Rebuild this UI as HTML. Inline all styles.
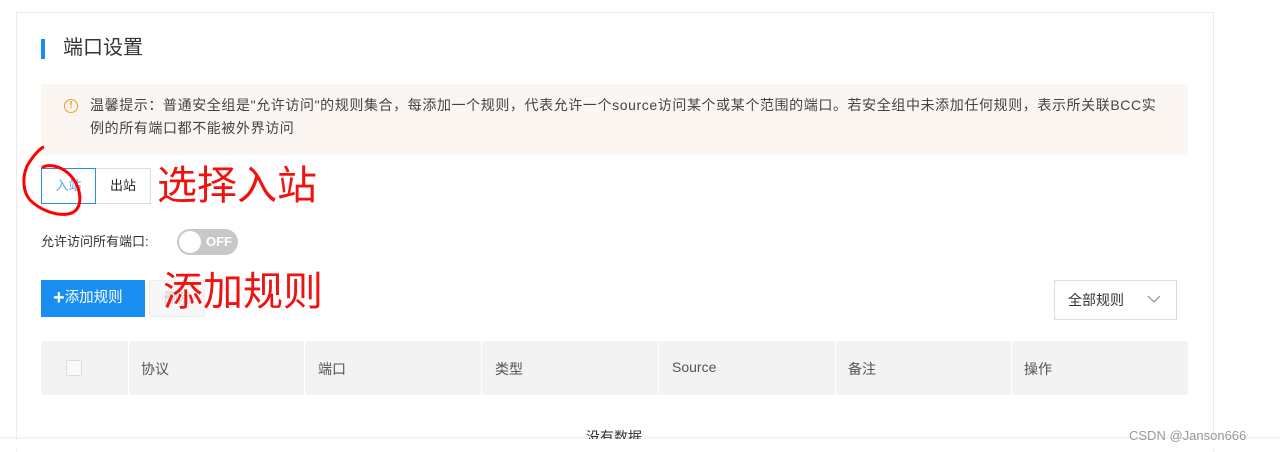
<!DOCTYPE html>
<html><head><meta charset="utf-8"><style>
*{margin:0;padding:0;box-sizing:border-box}
body{width:1280px;height:449px;background:#fff;position:relative;overflow:hidden;font-family:"Liberation Sans","Noto Sans CJK SC",sans-serif;color:#333}
.a{position:absolute}
</style></head><body>
<div class="a" style="left:16px;top:12px;width:1198px;height:440px;border:1px solid #ececec;border-bottom:none"></div>
<div class="a" style="left:41px;top:39px;width:4px;height:20px;background:#1a8ef0"></div>
<div class="a" style="left:63px;top:35px;font-size:20px;color:#333;line-height:26px">端口设置</div>
<div class="a" style="left:41px;top:84px;width:1147px;height:71px;background:#fbf6f1"></div>
<div class="a" style="left:64px;top:99px;width:14px;height:14px;border:1.5px solid #f39c1e;border-radius:50%;color:#f39c1e;font-size:10px;font-weight:bold;text-align:center;line-height:11px">!</div>
<div class="a" style="left:90px;top:94px;width:1100px;font-size:14px;letter-spacing:0.6px;line-height:23px;color:#444;white-space:nowrap">温馨提示：普通安全组是"允许访问"的规则集合，每添加一个规则，代表允许一个source访问某个或某个范围的端口。若安全组中未添加任何规则，表示所关联BCC实<br>例的所有端口都不能被外界访问</div>
<div class="a" style="left:41px;top:168px;width:55px;height:36px;border:1px solid #2a8ee8;color:#5aa3ee;font-size:13px;line-height:34px;text-align:center">入站</div>
<div class="a" style="left:96px;top:168px;width:55px;height:36px;border:1px solid #ddd;border-left:none;font-size:13px;line-height:34px;text-align:center;color:#222">出站</div>
<svg class="a" style="left:18px;top:142px" width="75" height="80"><path d="M26 5 C22 6 15 14 9 24 C4 36 5 50 12 58 C22 68 38 74 50 72 C62 70 64 58 60 46 C56 34 46 26 36 24 C30 23 26 24 24 26" fill="none" stroke="#f00" stroke-width="3"/></svg>
<div class="a" style="left:157px;top:163px;font-size:40px;line-height:46px;color:#f0120f">选择入站</div>
<div class="a" style="left:41px;top:232px;font-size:13px;line-height:20px;color:#333">允许访问所有端口:</div>
<div class="a" style="left:177px;top:229px;width:61px;height:26px;border-radius:13px;background:#c8c8c8"></div>
<div class="a" style="left:179px;top:231px;width:22px;height:22px;border-radius:11px;background:#fff"></div>
<div class="a" style="left:206px;top:233px;font-size:13px;color:#fff;font-weight:bold;line-height:18px">OFF</div>
<div class="a" style="left:41px;top:280px;width:104px;height:37px;background:#1a8ef0;color:#fff;font-size:14.5px;line-height:37px;padding-left:12px"><b style="font-size:20px;vertical-align:-2px">+</b>添加规则</div>
<div class="a" style="left:149px;top:280px;width:56px;height:37px;background:#f7f7f7;border:1px solid #eee;color:#ccc;font-size:14px;line-height:35px;padding-left:14px">删除</div>
<div class="a" style="left:163px;top:269px;font-size:40px;line-height:46px;color:#f0120f">添加规则</div>
<div class="a" style="left:1054px;top:280px;width:123px;height:40px;border:1px solid #ddd;font-size:14px;line-height:38px;padding-left:13px;color:#333">全部规则</div>
<svg class="a" style="left:1147px;top:294px" width="14" height="10"><path d="M1 2 L7 8 L13 2" fill="none" stroke="#999" stroke-width="1.3"/></svg>
<div class="a" style="left:41px;top:341px;width:1147px;height:54px;background:#f3f3f3"></div>
<div class="a" style="left:128px;top:341px;width:1px;height:54px;background:#fff"></div>
<div class="a" style="left:304px;top:341px;width:1px;height:54px;background:#fff"></div>
<div class="a" style="left:481px;top:341px;width:1px;height:54px;background:#fff"></div>
<div class="a" style="left:658px;top:341px;width:1px;height:54px;background:#fff"></div>
<div class="a" style="left:835px;top:341px;width:1px;height:54px;background:#fff"></div>
<div class="a" style="left:1011px;top:341px;width:1px;height:54px;background:#fff"></div>
<div class="a" style="left:66px;top:360px;width:16px;height:16px;border:1px solid #ddd;background:#fafafa;border-radius:2px"></div>
<div class="a" style="top:359px;left:141px;font-size:14px;color:#555">协议</div>
<div class="a" style="top:359px;left:318px;font-size:14px;color:#555">端口</div>
<div class="a" style="top:359px;left:495px;font-size:14px;color:#555">类型</div>
<div class="a" style="top:359px;left:672px;font-size:14px;color:#555">Source</div>
<div class="a" style="top:359px;left:848px;font-size:14px;color:#555">备注</div>
<div class="a" style="top:359px;left:1024px;font-size:14px;color:#555">操作</div>
<div class="a" style="top:427px;left:586px;font-size:14px;color:#333">没有数据</div>
<div class="a" style="left:0;top:439px;width:1280px;height:10px;background:#fff;box-shadow:0 -2px 3px rgba(0,0,0,0.06)"></div>
<div class="a" style="top:428px;left:1129px;font-size:13px;color:#999">CSDN @Janson666</div>
</body></html>
